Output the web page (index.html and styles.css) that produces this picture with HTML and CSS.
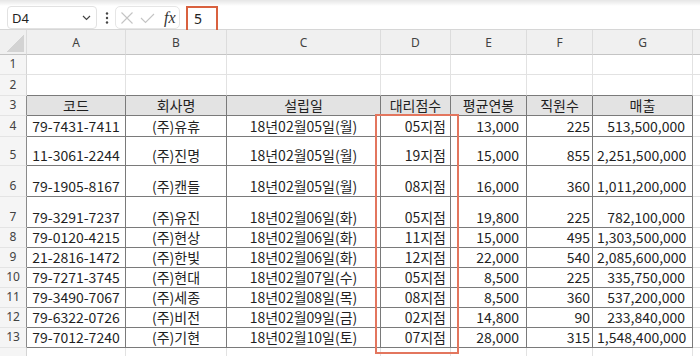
FILE: index.html
```html
<!DOCTYPE html>
<html>

<head>
  <meta charset="UTF-8">
  <meta name="viewport" content="width=device-width, initial-scale=1">
  <title>대리점 현황</title>

  <link rel="stylesheet" href="styles.css">
</head>

<body>
  <div class="fbar">
    <div class="namebox">
      <span>D4</span>
      <svg width="9" height="6" viewBox="0 0 9 6"><path d="M1 1 L4.5 4.5 L8 1" fill="none" stroke="#444" stroke-width="1.2"/></svg>
    </div>

    <svg class="dots" width="4" height="12" viewBox="0 0 4 12">
      <circle cx="2" cy="1.5" r="1.2" fill="#444"/>
      <circle cx="2" cy="6" r="1.2" fill="#444"/>
      <circle cx="2" cy="10.5" r="1.2" fill="#444"/>
    </svg>

    <div class="fx_box">
      <svg width="14" height="14" viewBox="0 0 14 14"><path d="M1.5 1.5 L12.5 12.5 M12.5 1.5 L1.5 12.5" stroke="#c4c4c4" stroke-width="1.1"/></svg>
      <svg width="15" height="14" viewBox="0 0 15 14"><path d="M1 7 L5.5 11.5 L14 3" fill="none" stroke="#c4c4c4" stroke-width="1.1"/></svg>
      <span class="fx">fx</span>
    </div>

    <div class="formula">5</div>
    <div class="mark mark_f"></div>
  </div>

  <div class="sheet">
    <table class="grid">
      <colgroup>
        <col class="w_rh">
        <col class="w_a">
        <col class="w_b">
        <col class="w_c">
        <col class="w_d">
        <col class="w_e">
        <col class="w_f">
        <col class="w_g">
        <col class="w_h">
      </colgroup>
      <thead>
        <tr class="h25">
          <th class="corner"></th>
          <th>A</th>
          <th>B</th>
          <th>C</th>
          <th>D</th>
          <th>E</th>
          <th>F</th>
          <th>G</th>
          <th></th>
        </tr>
      </thead>
      <tbody>
        <tr class="h20">
          <th class="rh">1</th>
          <td></td><td></td><td></td><td></td><td></td><td></td><td></td><td></td>
        </tr>
        <tr class="h21">
          <th class="rh">2</th>
          <td class="top"></td><td class="top"></td><td class="top"></td><td class="top"></td>
          <td class="top"></td><td class="top"></td><td class="top"></td><td></td>
        </tr>
        <tr class="h20">
          <th class="rh edge">3</th>
          <td class="t hd">코드</td>
          <td class="t hd">회사명</td>
          <td class="t hd">설립일</td>
          <td class="t hd">대리점수</td>
          <td class="t hd">평균연봉</td>
          <td class="t hd">직원수</td>
          <td class="t hd">매출</td>
          <td></td>
        </tr>
        <tr class="h21">
          <th class="rh edge">4</th>
          <td class="t c">79-7431-7411</td><td class="t c">(주)유휴</td><td class="t c">18년02월05일(월)</td>
          <td class="t r nd">05지점</td><td class="t r ne">13,000</td><td class="t r nf">225</td><td class="t r ng">513,500,000</td><td></td>
        </tr>
        <tr class="h29">
          <th class="rh edge">5</th>
          <td class="t c">11-3061-2244</td><td class="t c">(주)진명</td><td class="t c">18년02월05일(월)</td>
          <td class="t r nd">19지점</td><td class="t r ne">15,000</td><td class="t r nf">855</td><td class="t r ng">2,251,500,000</td><td></td>
        </tr>
        <tr class="h31">
          <th class="rh edge">6</th>
          <td class="t c">79-1905-8167</td><td class="t c">(주)캔들</td><td class="t c">18년02월05일(월)</td>
          <td class="t r nd">08지점</td><td class="t r ne">16,000</td><td class="t r nf">360</td><td class="t r ng">1,011,200,000</td><td></td>
        </tr>
        <tr class="h31">
          <th class="rh edge">7</th>
          <td class="t c">79-3291-7237</td><td class="t c">(주)유진</td><td class="t c">18년02월06일(화)</td>
          <td class="t r nd">05지점</td><td class="t r ne">19,800</td><td class="t r nf">225</td><td class="t r ng">782,100,000</td><td></td>
        </tr>
        <tr class="h20">
          <th class="rh edge">8</th>
          <td class="t c">79-0120-4215</td><td class="t c">(주)현상</td><td class="t c">18년02월06일(화)</td>
          <td class="t r nd">11지점</td><td class="t r ne">15,000</td><td class="t r nf">495</td><td class="t r ng">1,303,500,000</td><td></td>
        </tr>
        <tr class="h20">
          <th class="rh edge">9</th>
          <td class="t c">21-2816-1472</td><td class="t c">(주)한빛</td><td class="t c">18년02월06일(화)</td>
          <td class="t r nd">12지점</td><td class="t r ne">22,000</td><td class="t r nf">540</td><td class="t r ng">2,085,600,000</td><td></td>
        </tr>
        <tr class="h20">
          <th class="rh edge">10</th>
          <td class="t c">79-7271-3745</td><td class="t c">(주)현대</td><td class="t c">18년02월07일(수)</td>
          <td class="t r nd">05지점</td><td class="t r ne">8,500</td><td class="t r nf">225</td><td class="t r ng">335,750,000</td><td></td>
        </tr>
        <tr class="h20">
          <th class="rh edge">11</th>
          <td class="t c">79-3490-7067</td><td class="t c">(주)세종</td><td class="t c">18년02월08일(목)</td>
          <td class="t r nd">08지점</td><td class="t r ne">8,500</td><td class="t r nf">360</td><td class="t r ng">537,200,000</td><td></td>
        </tr>
        <tr class="h20">
          <th class="rh edge">12</th>
          <td class="t c">79-6322-0726</td><td class="t c">(주)비전</td><td class="t c">18년02월09일(금)</td>
          <td class="t r nd">02지점</td><td class="t r ne">14,800</td><td class="t r nf">90</td><td class="t r ng">233,840,000</td><td></td>
        </tr>
        <tr class="h20">
          <th class="rh edge">13</th>
          <td class="t c">79-7012-7240</td><td class="t c">(주)기현</td><td class="t c">18년02월10일(토)</td>
          <td class="t r nd">07지점</td><td class="t r ne">28,000</td><td class="t r nf">315</td><td class="t r ng">1,548,400,000</td><td></td>
        </tr>
        <tr class="h20">
          <th class="rh"></th>
          <td></td><td></td><td></td><td></td><td></td><td></td><td></td><td></td>
        </tr>
      </tbody>
    </table>

    <!-- 대리점수 열 강조 -->
    <div class="mark mark_d"></div>
  </div>
</body>

</html>
```

FILE: styles.css
```css
* {
  margin: 0;
  padding: 0;
  box-sizing: border-box;
}

body {
  width: 700px;
  height: 356px;
  overflow: hidden;
  background-color: #fff;
  color: #1f1f1f;
  font-family: "Noto Sans CJK KR", "Noto Sans", sans-serif;
}

/* 수식 입력줄 */
.fbar {
  position: relative;
  display: flex;
  align-items: flex-start;
  height: 30px;
  padding-top: 6px;
  background: linear-gradient(#e6e6e6 0, #f6f6f6 4px, #fff 6px);
  border-bottom: 1px solid #d6d6d6;
}

.namebox {
  display: flex;
  justify-content: space-between;
  align-items: center;
  width: 90px;
  height: 23px;
  margin-left: 7px;
  padding: 0 5px 0 4px;
  background-color: #fff;
  border: 1px solid #e2e2e2;
  border-radius: 4px;
  font-family: "Noto Sans", sans-serif;
  font-size: 13px;
  color: #222;
}

.dots {
  margin: 6px 6px 0 8px;
}

.fx_box {
  display: flex;
  align-items: center;
  gap: 6px;
  width: 65px;
  height: 23px;
  padding-left: 4px;
  background-color: #fff;
  border: 1px solid #e6e6e6;
  border-radius: 5px;
}

.fx {
  margin-left: 3px;
  font-family: "Liberation Serif", serif;
  font-style: italic;
  font-size: 16px;
  color: #333;
}

.formula {
  padding: 3px 0 0 14px;
  font-family: "Noto Sans", sans-serif;
  font-size: 14px;
  color: #222;
}

.mark {
  position: absolute;
  border: 2px solid #e3765e;
  pointer-events: none;
}

.mark_f {
  left: 186px;
  top: 6px;
  width: 32px;
  height: 26px;
  border-color: #d9613f;
}

.mark_d {
  left: 375px;
  top: 84px;
  width: 84px;
  height: 240px;
}

/* 시트 */
.sheet {
  position: relative;
}

.grid {
  width: 720px;
  table-layout: fixed;
  border-collapse: separate;
  border-spacing: 0;
}

.w_rh { width: 27px; }
.w_a { width: 99px; }
.w_b { width: 101px; }
.w_c { width: 154px; }
.w_d { width: 70px; }
.w_e { width: 76px; }
.w_f { width: 66px; }
.w_g { width: 100px; }
.w_h { width: 27px; }

.h20 { height: 20px; }
.h21 { height: 21px; }
.h25 { height: 25px; }
.h29 { height: 29px; }
.h31 { height: 31px; }

thead th {
  background-color: #f0f0f0;
  border-right: 1px solid #dcdcdc;
  border-bottom: 1px solid #c4c4c4;
  font-family: "Noto Sans", sans-serif;
  font-weight: normal;
  font-size: 12px;
  color: #424242;
}

.corner {
  background: linear-gradient(to bottom right, transparent 50%, #d3d3d3 50%) right 2px bottom 2px / 17px 17px no-repeat, #f0f0f0;
}

.rh {
  background-color: #f5f5f5;
  border-right: 1px solid #d4d4d4;
  border-bottom: 1px solid #e4e4e4;
  vertical-align: bottom;
  padding-bottom: 3px;
  font-family: "Noto Sans", sans-serif;
  font-weight: normal;
  font-size: 12px;
  line-height: 14px;
  color: #424242;
  text-align: center;
}

.rh.edge {
  border-right-color: #8a8a8a;
}

td {
  padding: 0 4px 2px;
  vertical-align: bottom;
  border-right: 1px solid #e2e2e2;
  border-bottom: 1px solid #e2e2e2;
  font-size: 14px;
  line-height: 16px;
  white-space: nowrap;
  overflow: hidden;
}

td.top {
  border-bottom-color: #7a7a7a;
}

td.t {
  border-right-color: #7a7a7a;
  border-bottom-color: #7a7a7a;
}

td.hd {
  background-color: #e3e3e3;
  text-align: center;
}

.c {
  text-align: center;
}

.r {
  text-align: right;
}

.nd { padding-right: 4px; }
.ne { padding-right: 7px; }
.nf { padding-right: 2px; }
.ng { padding-right: 7px; }
```
